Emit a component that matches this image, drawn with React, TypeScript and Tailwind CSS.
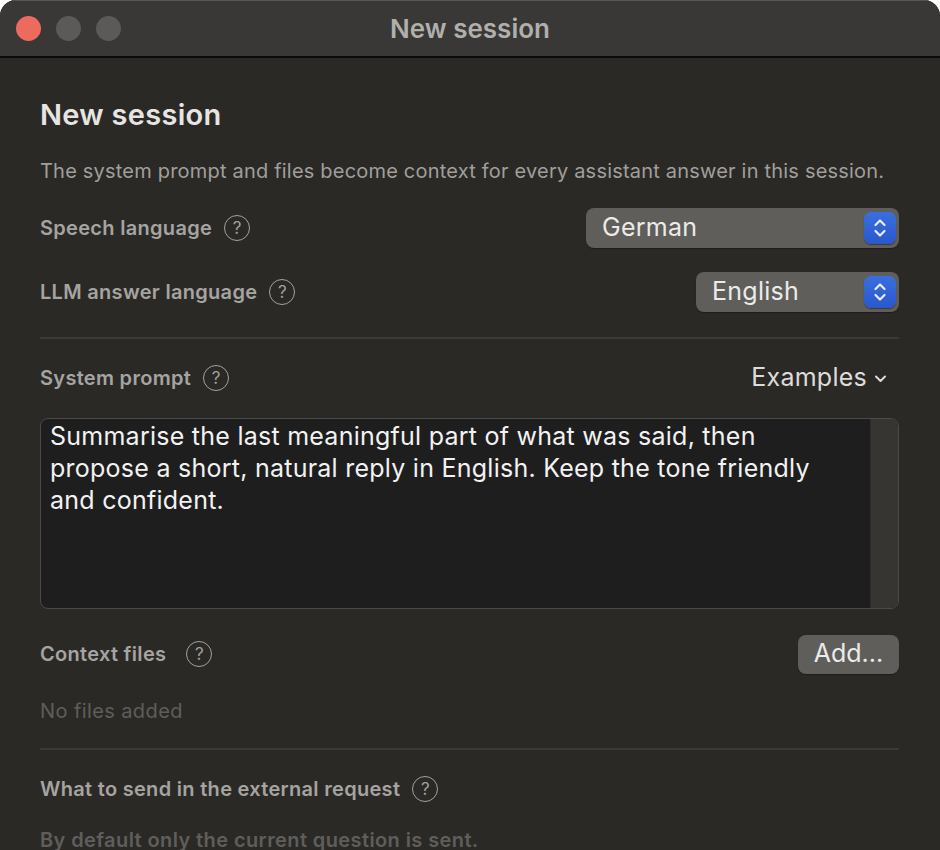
const font = { fontFamily: "Inter, 'Noto Sans', sans-serif" };

function HelpIcon() {
  return (
    <span className="flex h-[26px] w-[26px] shrink-0 items-center justify-center rounded-full border-[1.5px] border-[#a3a29f] text-[17px] leading-none text-[#a3a29f]">
      ?
    </span>
  );
}

function Label({ text, gap = "ml-3" }: { text: string; gap?: string }) {
  return (
    <div className="flex items-center">
      <span className="text-[20px] font-semibold tracking-[0.015em] text-[#a5a4a1]">{text}</span>
      <span className={gap}>
        <HelpIcon />
      </span>
    </div>
  );
}

function Stepper() {
  return (
    <span className="flex h-[32px] w-[32px] items-center justify-center rounded-[7px] bg-gradient-to-b from-[#3a6fe0] to-[#2a58cc] shadow-[0_1px_1px_rgba(0,0,0,0.4)]">
      <svg width="14" height="22" viewBox="0 0 14 22" fill="none" stroke="#e8eefc" strokeWidth="2.2" strokeLinecap="round" strokeLinejoin="round">
        <path d="M2.5 8 L7 3.5 L11.5 8" />
        <path d="M2.5 14 L7 18.5 L11.5 14" />
      </svg>
    </span>
  );
}

function Select({ value, width }: { value: string; width: string }) {
  return (
    <div className={`flex h-[40px] items-center justify-between rounded-[8px] bg-[#5f5e5b] pl-[16px] pr-[3px] shadow-[0_1px_1px_rgba(0,0,0,0.3)] ${width}`}>
      <span className="text-[25px] tracking-[0.01em] text-[#ebebea]">{value}</span>
      <Stepper />
    </div>
  );
}

export default function App() {
  return (
    <div className="h-[850px] w-[940px] overflow-hidden bg-white" style={font}>
      <div className="flex h-full flex-col overflow-hidden rounded-t-[16px] bg-[#2b2926]">
        <div className="relative flex h-[56px] shrink-0 items-center justify-center border-t border-[#575653] bg-[#393836]">
          <div className="absolute left-[16px] top-[15px] flex gap-[15px]">
            <span className="h-[25px] w-[25px] rounded-full bg-[#ec6a5e]" />
            <span className="h-[25px] w-[25px] rounded-full bg-[#5b5a58]" />
            <span className="h-[25px] w-[25px] rounded-full bg-[#5b5a58]" />
          </div>
          <span className="text-[26px] font-semibold text-[#b1afac]">New session</span>
        </div>
        <div className="h-[2px] shrink-0 bg-[#0b0b0a]" />

        <div className="flex flex-col px-[40px] pr-[41px] pt-[40px]">
          <h1 className="text-[29px] font-semibold leading-[34px] tracking-[0.01em] text-[#e6e5e4]">New session</h1>
          <p className="mt-[27px] text-[20px] leading-[24px] tracking-[0.01em] text-[#a09f9c]">
            The system prompt and files become context for every assistant answer in this session.
          </p>

          <div className="mt-[25px] flex items-center justify-between">
            <Label text="Speech language" />
            <Select value="German" width="w-[313px]" />
          </div>
          <div className="mt-[24px] flex items-center justify-between">
            <Label text="LLM answer language" />
            <Select value="English" width="w-[203px]" />
          </div>

          <div className="mt-[25px] h-[2px] bg-[#3b3a37]" />

          <div className="mt-[23px] flex h-[32px] items-center justify-between">
            <Label text="System prompt" />
            <div className="flex items-center pr-[12px]">
              <span className="text-[25px] tracking-[0.01em] text-[#dddcdb]">Examples</span>
              <svg className="ml-[7px]" width="13" height="9" viewBox="0 0 13 9" fill="none" stroke="#dddcdb" strokeWidth="2" strokeLinecap="round" strokeLinejoin="round">
                <path d="M2 2.5 L6.5 7 L11 2.5" />
              </svg>
            </div>
          </div>

          <div className="mt-[24px] flex h-[191px] overflow-hidden rounded-[8px] border-[1.5px] border-[#4b4a47] bg-[#1e1e1e]">
            <div className="flex-1 pl-[9px] pr-[25px] pt-[1px] text-[25px] leading-[32px] tracking-[0.01em] text-[#f2f2f2]">
              Summarise the last meaningful part of what was said, then propose a short, natural reply in English. Keep the tone friendly and confident.
            </div>
            <div className="w-[28px] shrink-0 border-l border-[#2e2d2b] bg-[#363532]" />
          </div>

          <div className="mt-[25px] flex h-[40px] items-center justify-between">
            <Label text="Context files" gap="ml-5" />
            <div className="flex h-[39px] w-[101px] items-center justify-center rounded-[8px] bg-[#5f5e5b] text-[25px] text-[#ebebea] shadow-[0_1px_1px_rgba(0,0,0,0.3)]">
              Add...
            </div>
          </div>

          <p className="mt-[25px] text-[20px] leading-[24px] tracking-[0.02em] text-[#5f5e5b]">No files added</p>

          <div className="mt-[25px] h-[2px] bg-[#3b3a37]" />

          <div className="mt-[23px] flex h-[32px] items-center">
            <Label text="What to send in the external request" />
          </div>

          <p className="mt-[23px] text-[20px] font-semibold leading-[24px] tracking-[0.02em] text-[#5f5e5b]">
            By default only the current question is sent.
          </p>
        </div>
      </div>
    </div>
  );
}
